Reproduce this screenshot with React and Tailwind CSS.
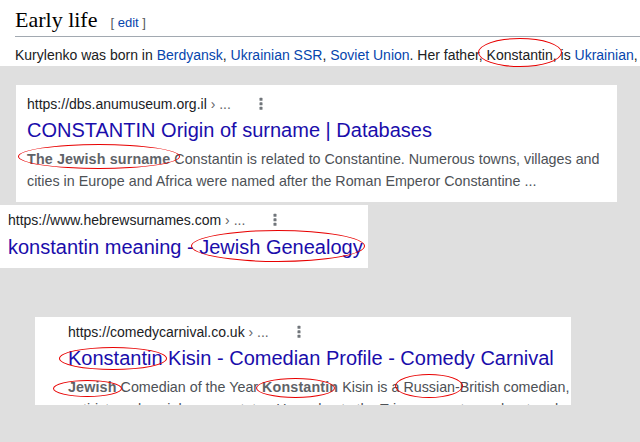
import React from "react";

function Ring({ className }) {
  return (
    <span
      className={
        "pointer-events-none absolute rounded-[50%] border border-[#e80000] " +
        className
      }
    />
  );
}

function Dots({ className }) {
  return (
    <svg
      width="6"
      height="14"
      viewBox="0 0 6 14"
      className={className}
      fill="#70757a"
    >
      <rect x="1.5" y="0.8" width="3" height="3" rx="0.6" />
      <rect x="1.5" y="5.3" width="3" height="3" rx="0.6" />
      <rect x="1.5" y="9.8" width="3" height="3" rx="0.6" />
    </svg>
  );
}

function Url({ children }) {
  return (
    <div className="flex items-start whitespace-nowrap text-[14px] leading-[20px] text-[#202124]">
      <span>
        {children}
        <span className="text-[#5f6368]"> › ...</span>
      </span>
      <Dots className="ml-[27px] mt-[3px]" />
    </div>
  );
}

export default function App() {
  return (
    <div className="min-h-[442px] w-[640px] overflow-hidden bg-[#dfdfdf] font-['Liberation_Sans',Arial,sans-serif]">
      {/* Wikipedia strip */}
      <div className="relative h-[66px] bg-white pl-[15px]">
        <div className="flex items-baseline border-b border-[#a2a9b1] pt-[7px] pb-[1px] leading-[25px]">
          <span className="font-['Liberation_Serif',Georgia,serif] text-[22px] text-black">
            Early life
          </span>
          <span className="ml-[13px] text-[13px] text-[#54595d]">
            [ <span className="text-[#0645ad]">edit</span> ]
          </span>
        </div>
        <div className="mt-[8px] whitespace-nowrap text-[14px] leading-[20px] text-[#202122]">
          Kurylenko was born in{" "}
          <span className="text-[#0645ad]">Berdyansk</span>,{" "}
          <span className="text-[#0645ad]">Ukrainian SSR</span>,{" "}
          <span className="text-[#0645ad]">Soviet Union</span>. Her father,
          Konstantin, is <span className="text-[#0645ad]">Ukrainian</span>,
        </div>
        <Ring className="left-[478px] top-[38px] h-[29px] w-[84px]" />
      </div>

      {/* Card 1 */}
      <div className="relative ml-[16px] mt-[19px] h-[117px] w-[601px] bg-white pl-[11px] pt-[9px]">
        <Url>https://dbs.anumuseum.org.il</Url>
        <div className="mt-[3px] whitespace-nowrap text-[20px] leading-[26px] text-[#1a0dab]">
          CONSTANTIN Origin of surname | Databases
        </div>
        <div className="mt-[5px] whitespace-nowrap text-[14.3px] leading-[22px] text-[#4d5156]">
          <b className="font-bold tracking-[0.15px] text-[#5f6368]">
            The Jewish surname
          </b>{" "}
          Constantin is related to Constantine. Numerous towns, villages and
          <br />
          cities in Europe and Africa were named after the Roman Emperor
          Constantine ...
        </div>
        <Ring className="left-[2px] top-[59px] h-[25px] w-[162px]" />
      </div>

      {/* Card 2 */}
      <div className="relative mt-[3px] h-[63px] w-[368px] bg-white pl-[8px] pt-[5px]">
        <Url>https://www.hebrewsurnames.com</Url>
        <div className="mt-[4px] whitespace-nowrap text-[20px] leading-[26px] text-[#1a0dab]">
          konstantin meaning - Jewish Genealogy
        </div>
        <Ring className="left-[191px] top-[25px] h-[32px] w-[174px]" />
      </div>

      {/* Card 3 */}
      <div className="relative ml-[35px] mt-[49px] h-[88px] w-[536px] overflow-hidden bg-white pl-[33px] pt-[5px]">
        <Url>https://comedycarnival.co.uk</Url>
        <div className="mt-[3px] whitespace-nowrap text-[20px] leading-[26px] text-[#1a0dab]">
          Konstantin Kisin - Comedian Profile - Comedy Carnival
        </div>
        <div className="mt-[5px] whitespace-nowrap text-[14.3px] leading-[22px] text-[#4d5156]">
          <b className="font-bold tracking-[0.15px] text-[#5f6368]">Jewish</b>{" "}
          Comedian of the Year{" "}
          <b className="font-bold tracking-[0.15px] text-[#5f6368]">
            Konstantin
          </b>{" "}
          Kisin is a Russian-British comedian,
          <br />
          satirist, and social commentator. He co-hosts the Triggernometry
          podcast and
        </div>
        <Ring className="left-[24px] top-[30px] h-[23px] w-[108px]" />
        <Ring className="left-[18px] top-[63px] h-[17px] w-[69px]" />
        <Ring className="left-[221px] top-[61px] h-[20px] w-[79px]" />
        <Ring className="left-[360px] top-[57px] h-[24px] w-[68px]" />
      </div>
    </div>
  );
}
